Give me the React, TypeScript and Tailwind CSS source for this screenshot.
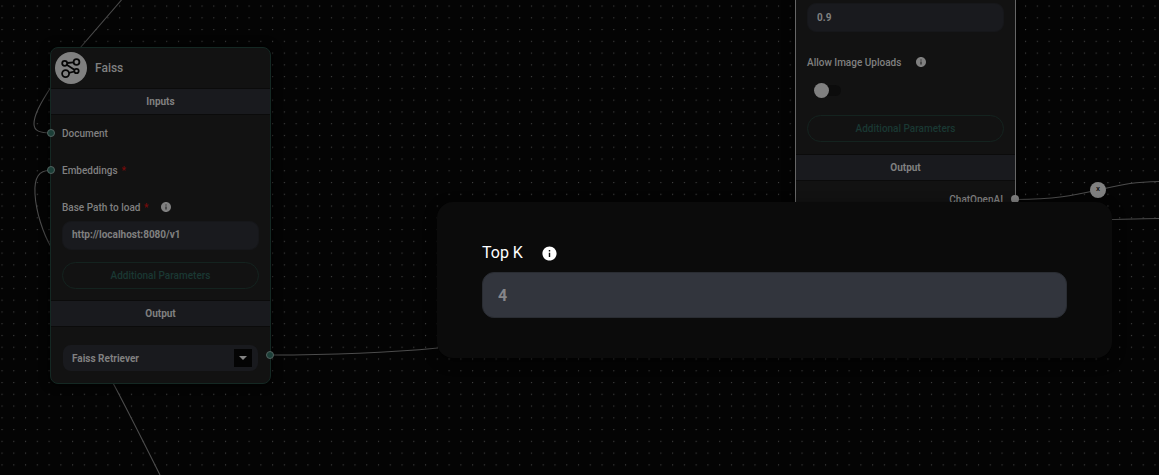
import type { ReactNode } from 'react'

function InfoIcon({ className }: { className: string }) {
  return (
    <svg viewBox="0 0 24 24" fill="currentColor" className={className} aria-hidden="true">
      <path d="M12 2C6.48 2 2 6.48 2 12s4.48 10 10 10 10-4.48 10-10S17.52 2 12 2m1 15h-2v-6h2zm0-8h-2V7h2z" />
    </svg>
  )
}

function FaissLogo() {
  return (
    <svg viewBox="0 0 32 32" className="size-8 shrink-0" aria-hidden="true">
      <circle cx="16" cy="16" r="16" fill="#808080" />
      <g fill="none" stroke="#060606" strokeWidth="1.8">
        <circle cx="9.7" cy="11.3" r="2.5" />
        <circle cx="21.5" cy="10" r="2.9" />
        <circle cx="10.6" cy="21.6" r="3.5" />
        <circle cx="21.5" cy="19" r="2.2" />
        <path d="M12.200 11l6.300-.7M11.700 12.700l7.700 5.100M14 20.900l5.300-1.400" />
      </g>
    </svg>
  )
}

function SectionTitle({ children }: { children: ReactNode }) {
  return (
    <h3 className="flex h-[27px] items-center justify-center border-y border-[#0b0b0b] bg-[#191a1e] text-[10px] font-bold">
      {children}
    </h3>
  )
}

function ParametersButton() {
  return (
    <button
      type="button"
      className="h-[27px] w-full rounded-full border border-[#14231f] text-[10px] font-medium text-[#1a3833]"
    >
      Additional Parameters
    </button>
  )
}

function Handle({ className }: { className: string }) {
  return <span className={`absolute size-2 rounded-full ${className}`} />
}

function Edges() {
  return (
    <svg className="absolute inset-0 size-full" aria-hidden="true">
      <defs>
        <pattern id="dots" x="25" y="5.5" width="11.765" height="11.765" patternUnits="userSpaceOnUse">
          <circle cx="0.6" cy="0.6" r="0.6" fill="#505050" />
        </pattern>
      </defs>
      <rect width="100%" height="100%" fill="url(#dots)" />
      <g fill="none" stroke="#4c4c4c" strokeWidth="1.1">
        <path d="M121.500 0L80 48" />
        <path d="M51 87C40 104 34 115 34 124C34 131 40 133 51 133" />
        <path d="M51 170.500C39 170 34 177 35 194C36 212 43 233 51 247" />
        <path d="M113 383C128 411 146 447 160 475" />
        <path d="M270 355C340 355 385 353 438 348" />
        <path d="M1015 199.500C1055 199.500 1075 195 1098 190S1130 182 1159 181.500" />
        <path d="M1110 219.500C1130 219 1145 218.500 1159 218.500" />
      </g>
    </svg>
  )
}

function FaissNode() {
  return (
    <section className="absolute top-[47px] left-[50px] w-[221px] rounded-lg border border-[#142823] bg-[#121212] shadow-[0_0_8px_2px_#00000099]">
      <header className="flex h-10 items-center gap-2 px-1">
        <FaissLogo />
        <h2 className="text-xs font-medium">Faiss</h2>
      </header>
      <SectionTitle>Inputs</SectionTitle>
      <div className="relative flex h-[37px] items-center px-[11px]">
        <Handle className="top-[14px] -left-1 border border-[#52625f] bg-[#1c3f38]" />
        Document
      </div>
      <div className="relative flex h-[37px] items-center gap-1 px-[11px]">
        <Handle className="top-[14px] -left-1 border border-[#52625f] bg-[#1c3f38]" />
        Embeddings <span className="text-[#7a0a0a]">*</span>
      </div>
      <div className="px-[11px] pb-[11px]">
        <div className="flex h-8 items-center pt-1">
          <label htmlFor="base-path">
            Base Path to load <span className="ml-px text-[#7a0a0a]">*</span>
          </label>
          <InfoIcon className="ml-3 size-3" />
        </div>
        <input
          id="base-path"
          defaultValue="http://localhost:8080/v1"
          className="mb-3 h-[29px] w-full rounded-[9px] border border-[#16171a] bg-[#191a1e] px-[9px] pb-0.5 font-bold outline-none"
        />
        <ParametersButton />
      </div>
      <SectionTitle>Output</SectionTitle>
      <div className="relative px-3 pt-[18px] pb-3">
        <div className="relative">
          <select
            aria-label="Output"
            className="block h-[26px] w-full appearance-none rounded-lg bg-[#191a1e] px-[9px] font-bold outline-none"
          >
            <option>Faiss Retriever</option>
          </select>
          <span className="pointer-events-none absolute top-1 right-[6px] flex size-[18px] items-center justify-center bg-[#040404]">
            <svg viewBox="0 0 8 4" className="h-1 w-2" aria-hidden="true">
              <path d="M0 0h8L4 4z" fill="#848484" />
            </svg>
          </span>
        </div>
        <Handle className="top-6 -right-1 border border-[#52625f] bg-[#1c3f38]" />
      </div>
    </section>
  )
}

function ChatNode() {
  return (
    <section className="absolute top-0 left-[795px] w-[221px] border-x border-[#666666] bg-[#121212] shadow-[0_0_8px_2px_#00000099]">
      <div className="px-[11px] pt-[3px] pb-3">
        <input
          aria-label="Top probability"
          defaultValue="0.9"
          className="h-[29px] w-full rounded-[9px] border border-[#16171a] bg-[#191a1e] px-[9px] font-bold outline-none"
        />
        <div className="mt-[22px] flex h-4 items-center">
          <label htmlFor="image-uploads">Allow Image Uploads</label>
          <InfoIcon className="ml-[14px] size-3" />
        </div>
        <div className="flex h-[45px] items-center pb-[5px] pl-[7px]">
          <label className="flex h-[11px] w-[27px] items-center rounded-full bg-[#0c0c0c]">
            <input
              id="image-uploads"
              type="checkbox"
              role="switch"
              className="size-[15px] appearance-none rounded-full bg-[#808080]"
            />
          </label>
        </div>
        <ParametersButton />
      </div>
      <SectionTitle>Output</SectionTitle>
      <div className="relative flex h-[37px] items-center justify-end px-3">
        ChatOpenAI
        <Handle className="top-[14px] -right-1 bg-[#808080]" />
      </div>
    </section>
  )
}

export default function App() {
  return (
    <main className="relative h-screen overflow-hidden bg-[#040404] font-['Roboto',sans-serif] text-[10px] font-medium text-[#808080]">
      <Edges />
      <FaissNode />
      <ChatNode />
      <button
        type="button"
        aria-label="Remove edge"
        className="absolute top-[182px] left-[1090px] flex size-4 items-center justify-center rounded-full bg-[#808080] pb-0.5 text-[8px] text-[#111111]"
      >
        x
      </button>
      <div
        role="dialog"
        aria-label="Additional Parameters"
        className="absolute top-[202px] right-[47px] left-[437px] rounded-2xl bg-[#0b0b0b] px-[45px] pt-[39px] pb-10 text-base font-normal text-white shadow-[0_4px_12px_2px_#00000066]"
      >
        <div className="mb-[7px] flex h-6 items-center gap-[18px]">
          <label htmlFor="top-k">Top K</label>
          <InfoIcon className="size-[17px]" />
        </div>
        <input
          id="top-k"
          placeholder="4"
          className="block h-[46px] w-full rounded-xl border border-[#292c32] bg-[#32353d] px-[15px] font-bold outline-none placeholder:text-[#85868a]"
        />
      </div>
    </main>
  )
}
